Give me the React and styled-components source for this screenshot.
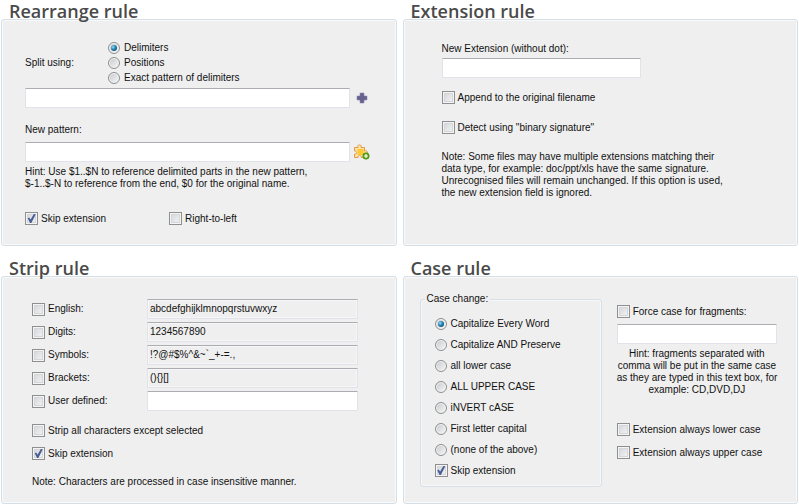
import React from 'react';
import styled, {createGlobalStyle, css} from "styled-components";

const GlobalStyle = createGlobalStyle`
  * {
    box-sizing: border-box;
  }

  body {
    margin: 0;
    background: #fff;
    color: #111;
    font-family: "Liberation Sans", Arial, sans-serif;
    font-size: 10px;
    line-height: 12px;
  }
`
const Page = styled.main`
  display: grid;
  grid-template-columns: 1fr 1fr;
  gap: 11px 6px;
  padding: 0 1px;
`
const Rule = styled.section`
  display: flex;
  flex-direction: column;
  min-width: 0;
`
const Title = styled.h2`
  position: relative;
  z-index: 1;
  height: 19px;
  margin: 0;
  padding-left: 8px;
  font-family: "Open Sans", sans-serif;
  font-size: 18px;
  font-weight: 600;
  line-height: 22px;
  color: #4a4a4a;
  white-space: nowrap;
`
const Panel = styled.div`
  flex: 1;
  padding: ${({$padding}) => $padding};
  background: #efefef;
  border: 1px solid #d5dfe5;
  border-radius: 3px;
  box-shadow: inset 0 0 0 1px #f8f9fa;
`
const Row = styled.div`
  display: flex;
  align-items: center;
  gap: ${({$gap = 0}) => $gap}px;
  margin-top: ${({$top = 0}) => $top}px;
`
const Caption = styled.label`
  display: block;
  width: max-content;
`
const GroupName = styled.span`
  width: 83px;
`
const Text = styled.p`
  margin: ${({$top}) => $top}px 0 0;
  text-align: ${({$align = 'left'}) => $align};
  white-space: nowrap;
`
const TextBox = styled.input`
  display: block;
  width: 100%;
  min-width: 0;
  height: 20px;
  margin: ${({$top = 0}) => $top}px 0 0;
  padding: 0 2px 1px;
  background: #fff;
  border: 1px solid #e2e3ea;
  border-top-color: #abadb3;
  border-radius: 1px;
  color: inherit;
  font: inherit;
  outline: none;

  &:read-only {
    background: #efefef;
    box-shadow: inset 0 0 0 1px #f6f6f6;
  }
`
const ShortTextBox = styled(TextBox)`
  width: 199px;
`
const IconButton = styled.button`
  display: flex;
  flex: none;
  padding: 0;
  background: none;
  border: 0;
`
const Option = styled.label`
  display: flex;
  align-items: center;
  gap: ${({$gap = 3}) => $gap}px;
  width: max-content;
  height: ${({$height = 15}) => $height}px;
  margin-top: ${({$top = 0}) => $top}px;
`
const mark = css`
  appearance: none;
  display: grid;
  place-items: center;
  flex: none;
  margin: 0;
`
const CheckMark = styled.input`
  ${mark};
  width: 13px;
  height: 13px;
  border: 1px solid #8e8f8f;
  background: linear-gradient(135deg, #d0d3d8, #f6f6f6);
  box-shadow: inset 0 0 0 1px #f4f4f4, inset 0 0 0 2px #d4d6d9;

  &:checked::after {
    content: "";
    width: 9px;
    height: 9px;
    background: #4a5f97;
    clip-path: polygon(8% 48%, 24% 40%, 40% 62%, 76% 0, 98% 4%, 48% 100%, 34% 100%);
  }
`
const RadioMark = styled.input`
  ${mark};
  width: 12px;
  height: 12px;
  border: 1px solid #8e8f8f;
  border-radius: 50%;
  background: linear-gradient(135deg, #c4c8cd, #f8f8f8);
  box-shadow: inset 0 0 0 1px #f4f4f4;

  &:checked::after {
    content: "";
    width: 6px;
    height: 6px;
    border-radius: 50%;
    background: radial-gradient(circle at 35% 35%, #9bdcf5, #1f7fb0 45%, #0c3552);
  }
`
const StripList = styled.div`
  display: grid;
  grid-template-columns: 115px 1fr;
  align-items: center;
  row-gap: 3px;
  margin-right: 24px;
`
const CaseColumns = styled.div`
  display: grid;
  grid-template-columns: 183fr 161fr;
  gap: 15px;
`
const Group = styled.fieldset`
  min-width: 0;
  margin: 0;
  padding: 8px 14px 5px;
  border: 1px solid #d5dfe5;
  border-radius: 3px;
  box-shadow: inset 0 0 0 1px #f6f7f8;

  legend {
    margin-left: -10px;
    padding: 0 2px;
    background: #efefef;
  }
`
const CaseSide = styled.div`
  min-width: 0;
  padding-top: 11px;
`

const Check = ({children, checked, ...rest}) => (
    <Option {...rest}>
        <CheckMark type="checkbox" defaultChecked={checked}/>{children}
    </Option>
);

const Radio = ({children, name, checked, ...rest}) => (
    <Option $gap={4} {...rest}>
        <RadioMark type="radio" name={name} defaultChecked={checked}/>{children}
    </Option>
);

const PlusIcon = () => (
    <svg width="16" height="16" viewBox="0 0 16 16">
        <path d="M6 3h4v3h3v4h-3v3H6v-3H3V6h3z" fill="#64618f" stroke="#8a88ad" strokeWidth=".6"/>
    </svg>
);

const PuzzleIcon = () => (
    <svg width="16" height="16" viewBox="0 0 16 16">
        <path
            d="M.5 3.500H4C3.300 2.200 4 .8 5.500.8S7.700 2.200 7 3.500h3.500V7c1.400-.7 3 0 3 1.600s-1.600 2.300-3 1.600v3.300H7.300c.4-1.200-.4-2-1.600-2s-2 .8-1.600 2H.5V10c1.300.4 2-.4 2-1.500s-.7-1.900-2-1.500z"
            fill="#fde3a6" stroke="#e39a4a"/>
        <path d="M3.500 5h6v6h-6z" fill="#fdc830"/>
        <circle cx="12" cy="12" r="3.200" fill="#5ba30f" stroke="#4a8a10" strokeWidth=".7"/>
        <path d="M12 10v4M10 12h4" stroke="#fff" strokeWidth="1.200"/>
    </svg>
);

const stripSets = [
    {label: 'English:', value: 'abcdefghijklmnopqrstuvwxyz'},
    {label: 'Digits:', value: '1234567890'},
    {label: 'Symbols:', value: '!?@#$%^&~`_+-=.,'},
    {label: 'Brackets:', value: '(){}[]'},
];

const caseModes = [
    'Capitalize Every Word',
    'Capitalize AND Preserve',
    'all lower case',
    'ALL UPPER CASE',
    'iNVERT cASE',
    'First letter capital',
    '(none of the above)',
];

const RearrangeRule = () => (
    <Rule>
        <Title>Rearrange rule</Title>
        <Panel $padding="20px 26px 19px 23px">
            <Row role="radiogroup" aria-labelledby="split-using">
                <GroupName id="split-using">Split using:</GroupName>
                <div>
                    <Radio name="split" checked>Delimiters</Radio>
                    <Radio name="split">Positions</Radio>
                    <Radio name="split">Exact pattern of delimiters</Radio>
                </div>
            </Row>
            <Row $gap={4} $top={3}>
                <TextBox aria-label="Delimiters"/>
                <IconButton type="button" aria-label="Add delimiter"><PlusIcon/></IconButton>
            </Row>
            <Row $top={16}>
                <Caption htmlFor="new-pattern">New pattern:</Caption>
            </Row>
            <Row $gap={4} $top={6}>
                <TextBox id="new-pattern"/>
                <IconButton type="button" aria-label="Insert tag"><PuzzleIcon/></IconButton>
            </Row>
            <Text $top={4}>
                Hint: Use $1..$N to reference delimited parts in the new pattern,<br/>
                $-1..$-N to reference from the end, $0 for the original name.
            </Text>
            <Row $gap={63} $top={21}>
                <Check checked>Skip extension</Check>
                <Check>Right-to-left</Check>
            </Row>
        </Panel>
    </Rule>
);

const ExtensionRule = () => (
    <Rule>
        <Title>Extension rule</Title>
        <Panel $padding="23px 38px 19px">
            <Caption htmlFor="new-extension">New Extension (without dot):</Caption>
            <ShortTextBox id="new-extension" $top={3}/>
            <Check $top={12}>Append to the original filename</Check>
            <Check $top={15}>Detect using "binary signature"</Check>
            <Text $top={16}>
                Note: Some files may have multiple extensions matching their<br/>
                data type, for example: doc/ppt/xls have the same signature.<br/>
                Unrecognised files will remain unchanged. If this option is used,<br/>
                the new extension field is ignored.
            </Text>
        </Panel>
    </Rule>
);

const StripRule = () => (
    <Rule>
        <Title>Strip rule</Title>
        <Panel $padding="22px 14px 15px 30px">
            <StripList>
                {stripSets.map(({label, value}) => (
                    <React.Fragment key={label}>
                        <Check>{label}</Check>
                        <TextBox readOnly aria-label={label} defaultValue={value}/>
                    </React.Fragment>
                ))}
                <Check>User defined:</Check>
                <TextBox aria-label="User defined:"/>
            </StripList>
            <Check $top={12}>Strip all characters except selected</Check>
            <Check $top={8} checked>Skip extension</Check>
            <Text $top={15}>Note: Characters are processed in case insensitive manner.</Text>
        </Panel>
    </Rule>
);

const CaseRule = () => (
    <Rule>
        <Title>Case rule</Title>
        <Panel $padding="16px 20px 15px 16px">
            <CaseColumns>
                <Group>
                    <legend>Case change:</legend>
                    {caseModes.map((mode, i) => (
                        <Radio key={mode} name="case" checked={i === 0} $height={21}>{mode}</Radio>
                    ))}
                    <Check $height={21} checked>Skip extension</Check>
                </Group>
                <CaseSide>
                    <Check>Force case for fragments:</Check>
                    <TextBox $top={5} aria-label="Fragments"/>
                    <Text $top={4} $align="center">
                        Hint: fragments separated with<br/>
                        comma will be put in the same case<br/>
                        as they are typed in this text box, for<br/>
                        example: CD,DVD,DJ
                    </Text>
                    <Check $top={26}>Extension always lower case</Check>
                    <Check $top={8}>Extension always upper case</Check>
                </CaseSide>
            </CaseColumns>
        </Panel>
    </Rule>
);

const App = () => {
    return (
        <>
            <GlobalStyle/>
            <Page>
                <RearrangeRule/>
                <ExtensionRule/>
                <StripRule/>
                <CaseRule/>
            </Page>
        </>
    );
};

export default App;
